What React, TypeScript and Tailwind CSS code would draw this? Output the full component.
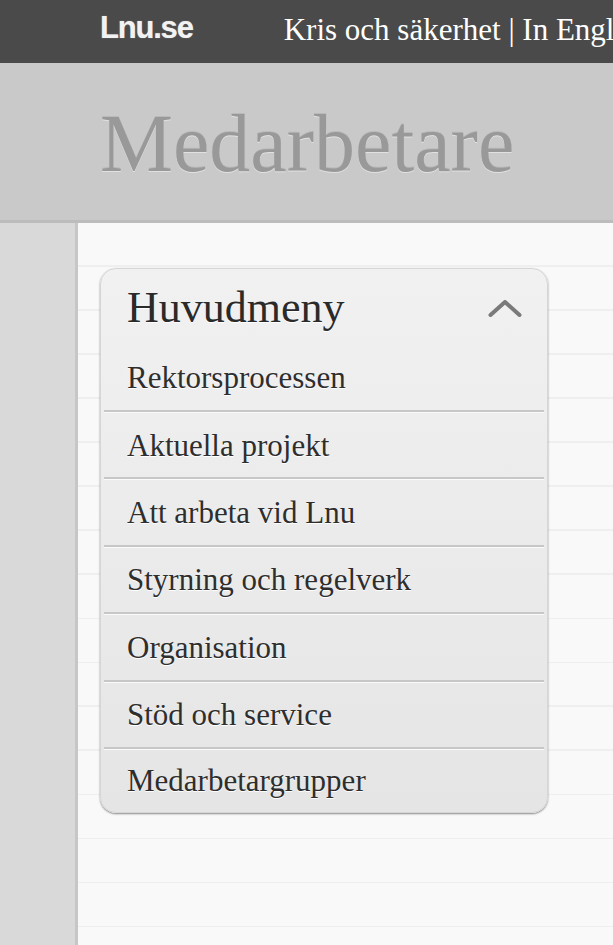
import React from "react";

const items = [
  "Rektorsprocessen",
  "Aktuella projekt",
  "Att arbeta vid Lnu",
  "Styrning och regelverk",
  "Organisation",
  "Stöd och service",
  "Medarbetargrupper",
];

export default function App() {
  return (
    <div className="w-[613px] h-[945px] overflow-hidden flex flex-col bg-[#f9f9f9]">
      {/* top bar */}
      <div className="h-[63px] shrink-0 bg-[#4a4a4a] flex items-start pl-[100px] whitespace-nowrap overflow-hidden">
        <span className="mt-[12px] text-[31px] leading-[31px] font-bold tracking-[-1.2px] text-[#f2f2f2] [font-family:'Liberation_Sans',Arial,sans-serif] [text-shadow:0_0_1px_rgba(255,255,255,0.5)]">
          Lnu.se
        </span>
        <span className="ml-[91px] mt-[14px] text-[31px] leading-[31px] text-white [font-family:'Liberation_Serif','Times_New_Roman',serif]">
          Kris och säkerhet | In English
        </span>
      </div>

      {/* header band */}
      <div className="h-[160px] shrink-0 bg-[#c9c9c9] border-b-[3px] border-[#bcbcbc] pl-[100px] pt-[40px]">
        <div className="text-[82px] leading-[82px] text-[#999999] [font-family:'Liberation_Serif','Times_New_Roman',serif] [text-shadow:0_1px_0_rgba(255,255,255,0.45),0_-1px_0_rgba(0,0,0,0.08)]">
          Medarbetare
        </div>
      </div>

      {/* body */}
      <div className="flex-1 flex">
        <div className="w-[78px] shrink-0 bg-[#d9d9d9] border-r-[3px] border-[#c6c6c6]" />
        <div className="flex-1 bg-[repeating-linear-gradient(to_bottom,#f9f9f9_0px,#f9f9f9_42.5px,#efefef_42.5px,#efefef_44px)] pl-[22px] pt-[45px]">
          <div className="w-[448px] rounded-[16px] border border-[#d6d6d6] bg-[linear-gradient(to_bottom,#f1f1f1,#e5e5e5)] shadow-[0_1px_2px_rgba(0,0,0,0.45)] px-[3px] [font-family:'Liberation_Serif','Times_New_Roman',serif]">
            <div className="h-[76.6px] flex items-start justify-between pt-[17px] pl-[23px] pr-[22px]">
              <span className="text-[44px] leading-[44px] text-[#2a2a2a] [text-shadow:0_1px_0_#ffffff]">
                Huvudmeny
              </span>
              <svg width="34" height="19" viewBox="0 0 34 19" className="mt-[13px] blur-[0.4px]">
                <polyline
                  points="2.5,16 17,3 31.5,16"
                  fill="none"
                  stroke="#7a7a7a"
                  strokeWidth="4"
                  strokeLinecap="round"
                  strokeLinejoin="round"
                />
              </svg>
            </div>
            {items.map((t, i) => (
              <div key={t}>
                <div
                  className={
                    i === items.length - 1
                      ? "h-[62px] flex items-center pl-[23px]"
                      : "h-[64.4px] flex items-center pl-[23px]"
                  }
                >
                  <span className="text-[31px] leading-[31px] text-[#2e2e2e] [text-shadow:0_1px_0_#ffffff] whitespace-nowrap">
                    {t}
                  </span>
                </div>
                {i < items.length - 1 && (
                  <div className="h-[3px] border-t-2 border-b border-t-[#c7c7c7] border-b-[#fafafa]" />
                )}
              </div>
            ))}
          </div>
        </div>
      </div>
    </div>
  );
}
